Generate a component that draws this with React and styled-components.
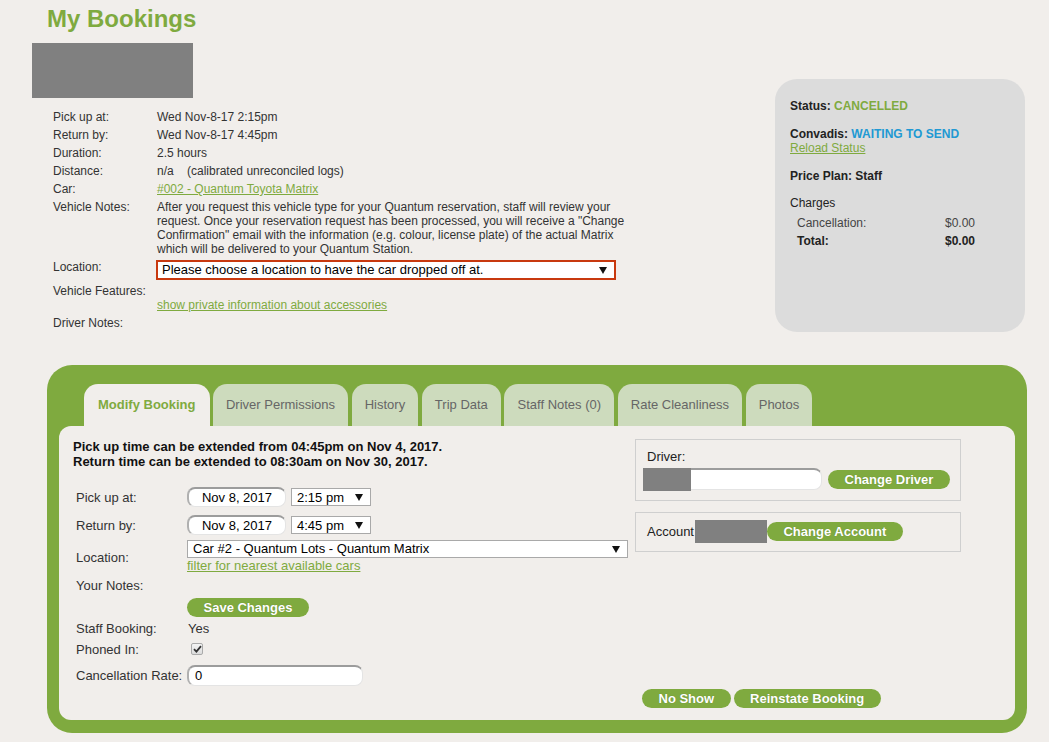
import React from 'react';
import styled, { createGlobalStyle } from 'styled-components';

const green = '#7faa3f';
const pageBg = '#f1eeeb';

const GlobalStyle = createGlobalStyle`
  html, body {
    margin: 0;
    padding: 0;
    background: ${pageBg};
  }
  body {
    font-family: "Liberation Sans", Arial, sans-serif;
    font-size: 12px;
    color: #333;
  }
`;

const Page = styled.div`
  width: 1049px;
  height: 742px;
  overflow: hidden;
  padding-top: 5px;
  box-sizing: border-box;
`;

const Title = styled.h1`
  margin: 0 0 0 47px;
  font-size: 24px;
  line-height: 28px;
  font-weight: bold;
  color: ${green};
`;

const TopRow = styled.div`
  display: flex;
  align-items: flex-start;
  margin-top: 10px;
`;

const Summary = styled.div`
  padding-left: 32px;
`;

const Redacted = styled.div`
  width: ${p => p.$w}px;
  height: ${p => p.$h}px;
  background: #808080;
  flex-shrink: 0;
`;

const Details = styled.div`
  display: grid;
  grid-template-columns: 104px 462px;
  margin: 10px 0 0 21px;
  line-height: 14px;
  color: #333;
  white-space: nowrap;
  & > div {
    padding: 2px 0;
  }
`;

const Link = styled.a`
  color: ${green};
  text-decoration: underline;
  cursor: pointer;
  font-size: ${p => p.$size || 12}px;
`;

const Arrow = () => (
  <svg width="8" height="7" viewBox="0 0 8 7">
    <polygon points="0,0 8,0 4,7" fill="#111" />
  </svg>
);

const FakeSelect = styled.div`
  box-sizing: border-box;
  display: flex;
  align-items: center;
  justify-content: space-between;
  width: ${p => p.$w}px;
  height: ${p => p.$h}px;
  padding: 0 7px 0 ${p => p.$pl || 5}px;
  background: #fff;
  border: ${p => (p.$error ? '2px solid #c8390f' : '1px solid #a9a9a9')};
  font-size: 13px;
  color: #000;
  white-space: nowrap;
`;

const InfoPanel = styled.div`
  box-sizing: border-box;
  width: 250px;
  height: 253px;
  margin: 36px 24px 0 auto;
  padding: 20px 15px;
  border-radius: 22px;
  background: #dcdcdc;
  line-height: 14px;
  color: #222;
`;

const InfoLine = styled.div`
  font-weight: ${p => (p.$bold ? 'bold' : 'normal')};
  margin-top: ${p => p.$mt || 0}px;
`;

const Value = styled.span`
  color: ${p => p.$color};
  font-weight: bold;
`;

const Charges = styled.div`
  display: grid;
  grid-template-columns: 1fr auto;
  row-gap: 4px;
  width: 178px;
  margin: 6px 0 0 7px;
`;

const ChargeCell = styled.div`
  font-weight: ${p => (p.$bold ? 'bold' : 'normal')};
  color: ${p => (p.$bold ? '#222' : '#444')};
  text-align: ${p => (p.$right ? 'right' : 'left')};
`;

const GreenBox = styled.div`
  margin: 33px 22px 0 47px;
  padding: 19px 12px 13px;
  border-radius: 25px;
  background: ${green};
`;

const TabBar = styled.div`
  display: flex;
  gap: 3.3px;
  padding-left: 25px;
`;

const Tab = styled.div`
  height: 42px;
  line-height: 42px;
  padding: 0 ${p => (p.$active ? 14 : 13.2)}px;
  border-radius: 14px 14px 0 0;
  font-size: 13px;
  font-weight: ${p => (p.$active ? 'bold' : 'normal')};
  color: ${p => (p.$active ? green : '#666')};
  background: ${p => (p.$active ? pageBg : '#cddbbd')};
`;

const TabPanel = styled.div`
  display: grid;
  grid-template-columns: 562px 326px;
  grid-template-rows: auto auto;
  padding: 13px 14px 12px;
  border-radius: 12px;
  background: ${pageBg};
`;

const Notice = styled.div`
  font-size: 13px;
  font-weight: bold;
  line-height: 15px;
  color: #111;
`;

const FormGrid = styled.div`
  display: grid;
  grid-template-columns: 114px 1fr;
  grid-template-rows: 28px 28px 36px 20px 24px 18px 24px 28px;
  align-items: center;
  margin-top: 14px;
  font-size: 13px;
  color: #333;
`;

const Label = styled.div`
  padding-left: 3px;
`;

const Cell = styled.div`
  display: flex;
  align-items: center;
  padding-left: ${p => p.$pl || 0}px;
`;

const InsetInput = styled.input`
  box-sizing: border-box;
  width: ${p => p.$w}px;
  height: ${p => p.$h}px;
  padding: 0 6px;
  border: 1px solid #e4e4e4;
  border-top: 2px solid #9c9c9c;
  border-left: 2px solid #b0b0b0;
  border-radius: 8px;
  background: #fff;
  font-family: inherit;
  font-size: 13px;
  color: #000;
  text-align: ${p => (p.$center ? 'center' : 'left')};
  outline: none;
`;

const Stack = styled.div`
  display: flex;
  flex-direction: column;
  line-height: 16px;
`;

const Button = styled.button`
  height: 19px;
  padding: 0 16.5px;
  border: none;
  border-radius: 10px;
  background: ${green};
  color: #fff;
  font-family: inherit;
  font-size: 13px;
  font-weight: bold;
  line-height: 19px;
  white-space: nowrap;
  text-shadow: 0 0 1px rgba(0, 0, 0, 0.25);
  cursor: pointer;
  margin-left: ${p => p.$ml || 0}px;
`;

const CheckBox = styled.span`
  box-sizing: border-box;
  display: inline-flex;
  align-items: center;
  justify-content: center;
  width: 12px;
  height: 12px;
  margin-left: 4px;
  border: 1px solid #aaa;
  border-radius: 2px;
  background: linear-gradient(#f4f4f4, #dcdcdc);
`;

const SideColumn = styled.div`
  display: flex;
  flex-direction: column;
  font-size: 13px;
  color: #222;
`;

const SideBox = styled.div`
  box-sizing: border-box;
  width: 326px;
  border: 1px solid #cfcfcf;
  padding: ${p => p.$pad};
  margin-top: ${p => p.$mt || 0}px;
  display: ${p => (p.$row ? 'flex' : 'block')};
  align-items: center;
`;

const SideLabel = styled.div`
  line-height: 15px;
  padding-left: 4px;
`;

const DriverRow = styled.div`
  display: flex;
  align-items: center;
  margin-top: 4px;
`;

const DriverField = styled.div`
  position: relative;
`;

const Cover = styled.div`
  position: absolute;
  left: 0;
  top: 0;
  width: 48px;
  height: 23px;
  background: #808080;
`;

const Actions = styled.div`
  grid-column: 2;
  display: flex;
  gap: 3px;
  padding-left: 7px;
`;

export default function App() {
  return (
    <>
      <GlobalStyle />
      <Page>
        <Title>My Bookings</Title>
        <TopRow>
          <Summary>
            <Redacted $w={161} $h={55} />
            <Details>
              <div>Pick up at:</div>
              <div>Wed Nov-8-17 2:15pm</div>
              <div>Return by:</div>
              <div>Wed Nov-8-17 4:45pm</div>
              <div>Duration:</div>
              <div>2.5 hours</div>
              <div>Distance:</div>
              <div>n/a &nbsp;&nbsp;&nbsp;(calibrated unreconciled logs)</div>
              <div>Car:</div>
              <div><Link>#002 - Quantum Toyota Matrix</Link></div>
              <div>Vehicle Notes:</div>
              <div>
                After you request this vehicle type for your Quantum reservation, staff will review your<br />
                request. Once your reservation request has been processed, you will receive a "Change<br />
                Confirmation" email with the information (e.g. colour, license plate) of the actual Matrix<br />
                which will be delivered to your Quantum Station.
              </div>
              <div>Location:</div>
              <div>
                <FakeSelect $w={460} $h={20} $error $pl={4} style={{ marginLeft: -1 }}>
                  <span>Please choose a location to have the car dropped off at.</span>
                  <Arrow />
                </FakeSelect>
              </div>
              <div>Vehicle Features:</div>
              <div>
                &nbsp;<br />
                <Link>show private information about accessories</Link>
              </div>
              <div>Driver Notes:</div>
              <div />
            </Details>
          </Summary>
          <InfoPanel>
            <InfoLine $bold>
              Status: <Value $color={green}>CANCELLED</Value>
            </InfoLine>
            <InfoLine $bold $mt={14}>
              Convadis: <Value $color="#2199d3">WAITING TO SEND</Value>
            </InfoLine>
            <InfoLine>
              <Link>Reload Status</Link>
            </InfoLine>
            <InfoLine $bold $mt={14}>Price Plan: Staff</InfoLine>
            <InfoLine $mt={13}>Charges</InfoLine>
            <Charges>
              <ChargeCell>Cancellation:</ChargeCell>
              <ChargeCell $right>$0.00</ChargeCell>
              <ChargeCell $bold>Total:</ChargeCell>
              <ChargeCell $bold $right>$0.00</ChargeCell>
            </Charges>
          </InfoPanel>
        </TopRow>

        <GreenBox>
          <TabBar>
            <Tab $active>Modify Booking</Tab>
            <Tab>Driver Permissions</Tab>
            <Tab>History</Tab>
            <Tab>Trip Data</Tab>
            <Tab>Staff Notes (0)</Tab>
            <Tab>Rate Cleanliness</Tab>
            <Tab>Photos</Tab>
          </TabBar>
          <TabPanel>
            <div>
              <Notice>
                Pick up time can be extended from 04:45pm on Nov 4, 2017.<br />
                Return time can be extended to 08:30am on Nov 30, 2017.
              </Notice>
              <FormGrid>
                <Label>Pick up at:</Label>
                <Cell>
                  <InsetInput $w={99} $h={20} $center defaultValue="Nov 8, 2017" />
                  <FakeSelect $w={80} $h={18} style={{ marginLeft: 5 }}>
                    <span>2:15 pm</span>
                    <Arrow />
                  </FakeSelect>
                </Cell>
                <Label>Return by:</Label>
                <Cell>
                  <InsetInput $w={99} $h={20} $center defaultValue="Nov 8, 2017" />
                  <FakeSelect $w={80} $h={18} style={{ marginLeft: 5 }}>
                    <span>4:45 pm</span>
                    <Arrow />
                  </FakeSelect>
                </Cell>
                <Label>Location:</Label>
                <Stack>
                  <FakeSelect $w={441} $h={18}>
                    <span>Car #2 - Quantum Lots - Quantum Matrix</span>
                    <Arrow />
                  </FakeSelect>
                  <div><Link $size={13}>filter for nearest available cars</Link></div>
                </Stack>
                <Label>Your Notes:</Label>
                <div />
                <div />
                <Cell>
                  <Button>Save Changes</Button>
                </Cell>
                <Label>Staff Booking:</Label>
                <Cell $pl={1}>Yes</Cell>
                <Label>Phoned In:</Label>
                <Cell>
                  <CheckBox>
                    <svg width="9" height="8" viewBox="0 0 9 8">
                      <path d="M1 4.2 L3.4 6.6 L8 1.2" stroke="#333" strokeWidth="1.8" fill="none" />
                    </svg>
                  </CheckBox>
                </Cell>
                <Label>Cancellation Rate:</Label>
                <Cell>
                  <InsetInput $w={176} $h={21} defaultValue="0" />
                </Cell>
              </FormGrid>
            </div>
            <SideColumn>
              <SideBox $pad="9px 10px 10px 7px">
                <SideLabel>Driver:</SideLabel>
                <DriverRow>
                  <DriverField>
                    <InsetInput $w={179} $h={22} readOnly />
                    <Cover />
                  </DriverField>
                  <Button $ml={6}>Change Driver</Button>
                </DriverRow>
              </SideBox>
              <SideBox $pad="7px 8px 8px 11px" $mt={11} $row>
                <span>Account</span>
                <Redacted $w={72} $h={23} style={{ marginLeft: 1 }} />
                <Button>Change Account</Button>
              </SideBox>
            </SideColumn>
            <Actions>
              <Button>No Show</Button>
              <Button>Reinstate Booking</Button>
            </Actions>
          </TabPanel>
        </GreenBox>
      </Page>
    </>
  );
}
